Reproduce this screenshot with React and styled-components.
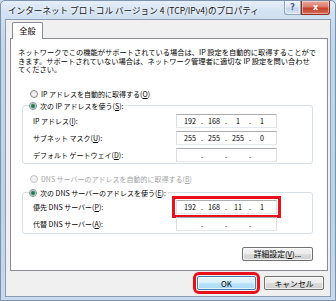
import React from 'react';
import styled, { createGlobalStyle } from 'styled-components';

const GlobalStyle = createGlobalStyle`
  html, body { margin: 0; padding: 0; background: #c9dbee; }
  body { font-family: "Noto Sans CJK JP", "Noto Sans", sans-serif; overflow: hidden; color: #000; }
  * { box-sizing: border-box; }
`;

const Window = styled.div`
  width: 336px;
  height: 301px;
  display: flex;
  flex-direction: column;
  border: 1px solid #7d93ad;
  border-radius: 5px 5px 0 0;
  padding: 0 4px 3px 4px;
  background: linear-gradient(180deg, #e6eff9 0px, #d3e2f2 10px, #c3d7ec 40px, #bdd2e9 70%, #c8daee 100%);
`;

const TitleBar = styled.div`
  height: 18px;
  flex: none;
  display: flex;
  align-items: flex-start;
  justify-content: space-between;
`;

const Title = styled.div`
  font-size: 8.6px;
  line-height: 18px;
  padding-left: 3px;
  white-space: nowrap;
  color: #111;
  text-shadow: 0 0 4px #fff, 0 0 2px #fff;
`;

const Captions = styled.div`
  display: flex;
  margin-right: 1px;
`;

const CaptionButton = styled.div`
  height: 14px;
  width: ${p => p.$w}px;
  display: flex;
  align-items: center;
  justify-content: center;
  font-family: "DejaVu Sans", sans-serif;
  font-weight: bold;
  font-size: 8px;
  border: 1px solid ${p => (p.$close ? '#8a2e22' : '#8ea2bb')};
  border-top: none;
  border-radius: ${p => (p.$close ? '0 0 3px 0' : '0 0 0 3px')};
  color: ${p => (p.$close ? '#fff' : '#4b5f7e')};
  background: ${p =>
    p.$close
      ? 'linear-gradient(180deg, #e9a99c 0%, #d97a68 45%, #c4412c 55%, #d36a4f 100%)'
      : 'linear-gradient(180deg, #eef4fb 0%, #dbe6f3 45%, #c6d6ea 55%, #d4e2f1 100%)'};
  box-shadow: inset 0 0 0 1px rgba(255,255,255,0.45);
`;

const Client = styled.div`
  flex: 1;
  display: flex;
  flex-direction: column;
  border: 1px solid #8a9db4;
  background: #f0f0f0;
  padding: 2px 2px 0 4px;
`;

const TabStrip = styled.div`
  display: flex;
  height: 17px;
  padding-left: 2px;
  flex: none;
`;

const Tab = styled.div`
  position: relative;
  z-index: 1;
  width: 31px;
  height: 17px;
  background: #fff;
  border: 1px solid #898c95;
  border-bottom: none;
  border-radius: 2px 2px 0 0;
  font-size: 8.2px;
  line-height: 15px;
  text-align: center;
`;

const Panel = styled.div`
  flex: 1;
  margin-top: -1px;
  background: #fff;
  border: 1px solid #898c95;
  padding: 9px 14px 0 7px;
  display: flex;
  flex-direction: column;
  font-size: 7px;
`;

const Para = styled.p`
  margin: 0;
  font-size: 7.25px;
  line-height: 8.6px;
  white-space: nowrap;
`;

const RadioRow = styled.div`
  display: flex;
  align-items: center;
  gap: 3px;
  height: 12px;
  margin-left: ${p => p.$ml ?? 12}px;
  margin-top: ${p => p.$mt ?? 0}px;
  white-space: nowrap;
  color: ${p => (p.$disabled ? '#a3a3a3' : '#000')};
`;

const RadioDot = styled.span`
  width: 8px;
  height: 8px;
  flex: none;
  border-radius: 50%;
  border: 1px solid ${p => (p.$disabled ? '#c4c4c4' : '#8a8a8a')};
  background: ${p =>
    p.$checked
      ? 'radial-gradient(circle, #2a6a35 0, #2f8a3e 1.4px, #6fb6e8 2.4px, #f4f4f4 2.8px, #dcdcdc 100%)'
      : p.$disabled
      ? 'radial-gradient(circle, #f4f4f4 0, #ececec 100%)'
      : 'radial-gradient(circle, #fafafa 0, #dedede 100%)'};
`;

const Group = styled.fieldset`
  margin: ${p => p.$mt ?? 0}px 0 0 4px;
  padding: 0;
  border: 1px solid #d5dfe5;
  border-radius: 3px;
  min-width: 0;
`;

const Legend = styled.legend`
  margin-left: 6px;
  padding: 0 2px 0 0;
  height: 12px;
  display: flex;
  align-items: center;
  gap: 3px;
  white-space: nowrap;
  font-size: 7px;
`;

const Rows = styled.div`
  display: grid;
  grid-template-columns: 143px 101px;
  row-gap: 3px;
  align-items: center;
  padding: ${p => p.$pt}px 0 ${p => p.$pb}px 10px;
`;

const Label = styled.div`
  white-space: nowrap;
  font-size: 7px;
`;

const IpBox = styled.div`
  height: 14px;
  display: flex;
  align-items: center;
  padding-left: 3px;
  background: #fff;
  border: 1px solid #dbdfe6;
  border-top-color: #abadb3;
  border-bottom-color: #e3e9ef;
  font-size: 7.2px;
  outline: ${p => (p.$hl ? '3px solid #e8101a' : 'none')};
  outline-offset: 1px;
`;

const Seg = styled.span`
  width: 20px;
  text-align: center;
`;

const Dot = styled.span`
  width: 4px;
  text-align: center;
`;

const AdvRow = styled.div`
  display: flex;
  justify-content: flex-end;
  margin-top: 13px;
`;

const Button = styled.div`
  width: ${p => p.$w}px;
  height: 14px;
  display: flex;
  align-items: center;
  justify-content: center;
  font-size: 7.8px;
  white-space: nowrap;
  border-radius: 2px;
  border: 1px solid ${p => (p.$default ? '#3c7fb1' : '#707070')};
  background: ${p =>
    p.$default
      ? 'linear-gradient(180deg, #eaf6fd 0%, #d9f0fc 50%, #bee6fd 50%, #a7d9f5 100%)'
      : 'linear-gradient(180deg, #f2f2f2 0%, #ebebeb 50%, #dddddd 50%, #cfcfcf 100%)'};
  box-shadow: inset 0 0 0 1px rgba(255,255,255,0.7);
  outline: ${p => (p.$hl ? '3px solid #e8101a' : 'none')};
  outline-offset: 1px;
`;

const ButtonBar = styled.div`
  height: 25px;
  flex: none;
  display: flex;
  justify-content: flex-end;
  align-items: flex-start;
  gap: 8px;
  padding: 5px 4px 0 0;
`;

const Radio = ({ checked, disabled }) => <RadioDot $checked={checked} $disabled={disabled} />;

const Ip = ({ parts = ['', '', '', ''], hl }) => (
  <IpBox $hl={hl}>
    <Seg>{parts[0]}</Seg>
    <Dot>.</Dot>
    <Seg>{parts[1]}</Seg>
    <Dot>.</Dot>
    <Seg>{parts[2]}</Seg>
    <Dot>.</Dot>
    <Seg>{parts[3]}</Seg>
  </IpBox>
);

export default function App() {
  return (
    <>
      <GlobalStyle />
      <Window>
        <TitleBar>
          <Title>インターネット プロトコル バージョン 4 (TCP/IPv4)のプロパティ</Title>
          <Captions>
            <CaptionButton $w={17}>?</CaptionButton>
            <CaptionButton $w={29} $close>x</CaptionButton>
          </Captions>
        </TitleBar>
        <Client>
          <TabStrip>
            <Tab>全般</Tab>
          </TabStrip>
          <Panel>
            <Para>
              ネットワークでこの機能がサポートされている場合は、IP 設定を自動的に取得することがで
              <br />
              きます。サポートされていない場合は、ネットワーク管理者に適切な IP 設定を問い合わせ
              <br />
              てください。
            </Para>
            <RadioRow $mt={14}>
              <Radio />
              <span>IP アドレスを自動的に取得する(<u>O</u>)</span>
            </RadioRow>
            <Group>
              <Legend>
                <Radio checked />
                <span>次の IP アドレスを使う(<u>S</u>):</span>
              </Legend>
              <Rows $pt={2} $pb={1}>
                <Label>IP アドレス(<u>I</u>):</Label>
                <Ip parts={['192', '168', '1', '1']} />
                <Label>サブネット マスク(<u>U</u>):</Label>
                <Ip parts={['255', '255', '255', '0']} />
                <Label>デフォルト ゲートウェイ(<u>D</u>):</Label>
                <Ip />
              </Rows>
            </Group>
            <RadioRow $mt={9} $disabled>
              <Radio disabled />
              <span>DNS サーバーのアドレスを自動的に取得する(<u>B</u>)</span>
            </RadioRow>
            <Group $mt={2}>
              <Legend>
                <Radio checked />
                <span>次の DNS サーバーのアドレスを使う(<u>E</u>):</span>
              </Legend>
              <Rows $pt={1} $pb={2}>
                <Label>優先 DNS サーバー(<u>P</u>):</Label>
                <Ip parts={['192', '168', '11', '1']} hl />
                <Label>代替 DNS サーバー(<u>A</u>):</Label>
                <Ip />
              </Rows>
            </Group>
            <AdvRow>
              <Button $w={71}>詳細設定(<u>V</u>)...</Button>
            </AdvRow>
          </Panel>
          <ButtonBar>
            <Button $w={59} $default $hl>OK</Button>
            <Button $w={60}>キャンセル</Button>
          </ButtonBar>
        </Client>
      </Window>
    </>
  );
}
